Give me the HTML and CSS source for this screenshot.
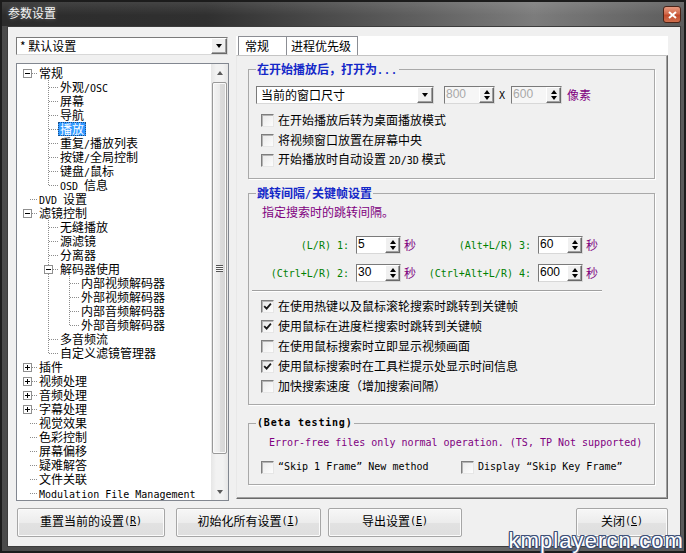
FILE: index.html
```html
<!DOCTYPE html>
<html lang="zh-CN">
<head>
<meta charset="utf-8">
<title>参数设置</title>
<link rel="stylesheet" href="styles.css">
</head>
<body>
<div class="window">
  <div class="titlebar">
    <span class="title">参数设置</span>
    <span class="close"><svg width="9" height="8" viewBox="0 0 9 8"><path d="M1 1 L8 7 M8 1 L1 7" stroke="#fff" stroke-width="2" fill="none"/></svg></span>
  </div>
  <div class="client">
    <div class="main">
      <div class="leftcol">
        <div class="combo preset">
          <span class="combo-text">* 默认设置</span>
          <span class="drop"><i class="tri-dn"></i></span>
        </div>
        <div class="tree">
          <div class="tree-list">
            <div class="row"><span class="c bx"><i class="box minus"></i></span><span class="lbl">常规</span></div>
            <div class="row"><span class="c"></span><span class="c t"></span><span class="lbl">外观<span class="en">/OSC</span></span></div>
            <div class="row"><span class="c"></span><span class="c t"></span><span class="lbl">屏幕</span></div>
            <div class="row"><span class="c"></span><span class="c t"></span><span class="lbl">导航</span></div>
            <div class="row"><span class="c"></span><span class="c t"></span><span class="lbl sel">播放</span></div>
            <div class="row"><span class="c"></span><span class="c t"></span><span class="lbl">重复<span class="en">/</span>播放列表</span></div>
            <div class="row"><span class="c"></span><span class="c t"></span><span class="lbl">按键<span class="en">/</span>全局控制</span></div>
            <div class="row"><span class="c"></span><span class="c t"></span><span class="lbl">键盘<span class="en">/</span>鼠标</span></div>
            <div class="row"><span class="c"></span><span class="c l"></span><span class="lbl"><span class="en">OSD </span>信息</span></div>
            <div class="row"><span class="c rl"></span><span class="lbl"><span class="en">DVD </span>设置</span></div>
            <div class="row"><span class="c bx"><i class="box minus"></i></span><span class="lbl">滤镜控制</span></div>
            <div class="row"><span class="c"></span><span class="c t"></span><span class="lbl">无缝播放</span></div>
            <div class="row"><span class="c"></span><span class="c t"></span><span class="lbl">源滤镜</span></div>
            <div class="row"><span class="c"></span><span class="c t"></span><span class="lbl">分离器</span></div>
            <div class="row"><span class="c"></span><span class="c t bx"><i class="box minus"></i></span><span class="lbl">解码器使用</span></div>
            <div class="row"><span class="c"></span><span class="c v"></span><span class="c t"></span><span class="lbl">内部视频解码器</span></div>
            <div class="row"><span class="c"></span><span class="c v"></span><span class="c t"></span><span class="lbl">外部视频解码器</span></div>
            <div class="row"><span class="c"></span><span class="c v"></span><span class="c t"></span><span class="lbl">内部音频解码器</span></div>
            <div class="row"><span class="c"></span><span class="c v"></span><span class="c l"></span><span class="lbl">外部音频解码器</span></div>
            <div class="row"><span class="c"></span><span class="c t"></span><span class="lbl">多音频流</span></div>
            <div class="row"><span class="c"></span><span class="c l"></span><span class="lbl">自定义滤镜管理器</span></div>
            <div class="row"><span class="c bx"><i class="box plus"></i></span><span class="lbl">插件</span></div>
            <div class="row"><span class="c bx"><i class="box plus"></i></span><span class="lbl">视频处理</span></div>
            <div class="row"><span class="c bx"><i class="box plus"></i></span><span class="lbl">音频处理</span></div>
            <div class="row"><span class="c bx"><i class="box plus"></i></span><span class="lbl">字幕处理</span></div>
            <div class="row"><span class="c rl"></span><span class="lbl">视觉效果</span></div>
            <div class="row"><span class="c rl"></span><span class="lbl">色彩控制</span></div>
            <div class="row"><span class="c rl"></span><span class="lbl">屏幕偏移</span></div>
            <div class="row"><span class="c rl"></span><span class="lbl">疑难解答</span></div>
            <div class="row"><span class="c rl"></span><span class="lbl">文件关联</span></div>
            <div class="row"><span class="c rl"></span><span class="lbl"><span class="en">Modulation File Management</span></span></div>
          </div>
          <div class="vscroll">
            <div class="sbtn"><i class="tri-up gray"></i></div>
            <div class="track"><div class="thumb"><i class="grip"></i></div></div>
            <div class="sbtn"><i class="tri-dn gray"></i></div>
          </div>
        </div>
      </div>
      <div class="rightcol">
        <div class="tabs">
          <div class="tab tab1 active">常规</div>
          <div class="tab tab2">进程优先级</div>
        </div>
        <div class="panel">
          <fieldset class="group g1">
            <legend class="blue">在开始播放后，打开为<span class="en">...</span></legend>
            <div class="sizerow">
              <div class="combo wincombo"><span class="combo-text">当前的窗口尺寸</span><span class="drop"><i class="tri-dn"></i></span></div>
              <div class="spin dis s51 sp1"><span class="val">800</span><span class="spinbtn"><i class="tri-up"></i><i class="tri-dn"></i></span></div>
              <span class="en xmark">X</span>
              <div class="spin dis s51 sp2"><span class="val">600</span><span class="spinbtn"><i class="tri-up"></i><i class="tri-dn"></i></span></div>
              <span class="purple px">像素</span>
            </div>
            <div class="checks first">
              <div class="chk"><span class="cb"></span><span>在开始播放后转为桌面播放模式</span></div>
              <div class="chk"><span class="cb"></span><span>将视频窗口放置在屏幕中央</span></div>
              <div class="chk"><span class="cb"></span><span>开始播放时自动设置 <span class="en">2D/3D</span> 模式</span></div>
            </div>
          </fieldset>

          <fieldset class="group g2">
            <legend class="blue">跳转间隔<span class="en">/</span>关键帧设置</legend>
            <div class="hint purple">指定搜索时的跳转间隔。</div>
            <div class="jumprow r1">
              <span class="en green lab1">(L/R) 1:</span>
              <div class="spin s45"><span class="val">5</span><span class="spinbtn"><i class="tri-up"></i><i class="tri-dn"></i></span></div>
              <span class="purple sec">秒</span>
              <span class="en green lab2">(Alt+L/R) 3:</span>
              <div class="spin s45"><span class="val">60</span><span class="spinbtn"><i class="tri-up"></i><i class="tri-dn"></i></span></div>
              <span class="purple sec">秒</span>
            </div>
            <div class="jumprow r2">
              <span class="en green lab1">(Ctrl+L/R) 2:</span>
              <div class="spin s45"><span class="val">30</span><span class="spinbtn"><i class="tri-up"></i><i class="tri-dn"></i></span></div>
              <span class="purple sec">秒</span>
              <span class="en green lab2">(Ctrl+Alt+L/R) 4:</span>
              <div class="spin s45"><span class="val">600</span><span class="spinbtn"><i class="tri-up"></i><i class="tri-dn"></i></span></div>
              <span class="purple sec">秒</span>
            </div>
            <div class="sep"></div>
            <div class="checks second">
              <div class="chk"><span class="cb on"><svg width="9" height="9" viewBox="0 0 9 9"><path d="M1.2 4.2 L3.6 6.6 L7.9 1.6" stroke="#1a1a1a" stroke-width="1.8" fill="none"/></svg></span><span>在使用热键以及鼠标滚轮搜索时跳转到关键帧</span></div>
              <div class="chk"><span class="cb on"><svg width="9" height="9" viewBox="0 0 9 9"><path d="M1.2 4.2 L3.6 6.6 L7.9 1.6" stroke="#1a1a1a" stroke-width="1.8" fill="none"/></svg></span><span>使用鼠标在进度栏搜索时跳转到关键帧</span></div>
              <div class="chk"><span class="cb"></span><span>在使用鼠标搜索时立即显示视频画面</span></div>
              <div class="chk"><span class="cb on"><svg width="9" height="9" viewBox="0 0 9 9"><path d="M1.2 4.2 L3.6 6.6 L7.9 1.6" stroke="#1a1a1a" stroke-width="1.8" fill="none"/></svg></span><span>使用鼠标搜索时在工具栏提示处显示时间信息</span></div>
              <div class="chk"><span class="cb"></span><span>加快搜索速度（增加搜索间隔）</span></div>
            </div>
          </fieldset>

          <fieldset class="group g3">
            <legend class="beta">(Beta testing)</legend>
            <div class="err en purple">Error-free files only normal operation. (TS, TP Not supported)</div>
            <div class="betachecks">
              <div class="chk b1"><span class="cb"></span><span class="en">“Skip 1 Frame” New method</span></div>
              <div class="chk"><span class="cb"></span><span class="en">Display “Skip Key Frame”</span></div>
            </div>
          </fieldset>
        </div>
      </div>
    </div>
    <div class="buttons">
      <div class="btn btn1">重置当前的设置<span class="en">(<u>R</u>)</span></div>
      <div class="btn btn2">初始化所有设置<span class="en">(<u>I</u>)</span></div>
      <div class="btn btn3">导出设置<span class="en">(<u>E</u>)</span></div>
      <div class="btn btn4">关闭<span class="en">(<u>C</u>)</span></div>
    </div>
  </div>
  <div class="watermark">kmplayercn.com</div>
</div>
</body>
</html>
```

FILE: styles.css
```css
* { box-sizing: border-box; }

html, body {
  margin: 0;
  padding: 0;
}

body {
  width: 686px;
  height: 553px;
  overflow: hidden;
  font-family: "Noto Sans CJK SC", "Liberation Sans", sans-serif;
  font-size: 12px;
  color: #000;
  background: #2a2a2a;
}

:root {
  --dv: repeating-linear-gradient(to bottom, #8c8c8c 0 1px, transparent 1px 2px);
  --dh: repeating-linear-gradient(to right, #8c8c8c 0 1px, transparent 1px 2px);
}

.en {
  font-family: "DejaVu Sans Mono", "Liberation Mono", monospace;
  font-size: 10px;
  letter-spacing: 0;
}

.blue { color: #1428c8; }
.purple { color: #800080; }
.green { color: #008000; }

/* window frame */
.window {
  position: relative;
  width: 686px;
  height: 553px;
  border: 2px solid #1c1c1c;
  background: linear-gradient(to right, #4a4a4a, #6e6e6e 60%, #5a5a5a);
  display: flex;
  flex-direction: column;
}

.titlebar {
  height: 24px;
  flex: none;
  display: flex;
  align-items: flex-start;
  background:
    linear-gradient(to bottom, rgba(255,255,255,0.10), rgba(255,255,255,0) 55%),
    linear-gradient(to right, #2c2c2c 0%, #303030 30%, #5e5e5e 60%, #7c7c7c 78%, #5c5c5c 100%);
}

.title {
  margin: 4px 0 0 6px;
  line-height: 14px;
  color: #f4f4f4;
  text-shadow: 0 0 4px rgba(255,255,255,0.35);
}

.close {
  margin: 4px 3px 0 auto;
  width: 18px;
  height: 17px;
  border: 1px solid #4a2418;
  border-radius: 3px;
  background: linear-gradient(to bottom, #e89a80 0%, #d26a4c 45%, #c24a2c 55%, #d0704e 100%);
  display: flex;
  align-items: center;
  justify-content: center;
}

.client {
  flex: 1;
  margin: 0 3px 4px 5px;
  border: 1px solid #3c3c3c;
  background: #f0f0f0;
  padding: 9px 12px 0 8px;
  display: flex;
  flex-direction: column;
}

.main {
  height: 465px;
  display: flex;
  gap: 7px;
}

/* left column */
.leftcol {
  width: 213px;
  flex: none;
  padding-top: 1px;
  display: flex;
  flex-direction: column;
  gap: 8px;
}

.combo {
  height: 18px;
  display: flex;
  align-items: stretch;
  background: #fff;
  border: 1px solid;
  border-color: #7a7a7a #d8d8d8 #d8d8d8 #7a7a7a;
}

.preset { width: 212px; }

.combo-text {
  flex: 1;
  padding-left: 3px;
  line-height: 16px;
  white-space: nowrap;
  overflow: hidden;
}

.drop {
  width: 16px;
  flex: none;
  background: #f0f0f0;
  border: 1px solid;
  border-color: #fff #696969 #696969 #fff;
  box-shadow: inset -1px -1px 0 #a0a0a0;
  display: flex;
  align-items: center;
  justify-content: center;
}

.tri-dn {
  display: block;
  width: 1px;
  height: 0;
  border-left: 3px solid transparent;
  border-right: 3px solid transparent;
  border-top: 4px solid #000;
}

.tri-up {
  display: block;
  width: 1px;
  height: 0;
  border-left: 3px solid transparent;
  border-right: 3px solid transparent;
  border-bottom: 4px solid #000;
}

.tri-up.gray { border-bottom-color: #5a5a5a; }
.tri-dn.gray { border-top-color: #5a5a5a; }

.tree {
  height: 438px;
  display: flex;
  background: #fff;
  border: 1px solid #828790;
}

.tree-list {
  flex: 1;
  padding-top: 2px;
  overflow: hidden;
}

.row {
  height: 14px;
  display: flex;
  align-items: center;
  white-space: nowrap;
}

.c {
  width: 21px;
  height: 14px;
  flex: none;
  display: flex;
  align-items: center;
  background-repeat: no-repeat;
}

.c.v {
  background-image: var(--dv);
  background-size: 1px 14px;
  background-position: 10px 0;
}

.c.t {
  background-image: var(--dv), var(--dh);
  background-size: 1px 14px, 10px 1px;
  background-position: 10px 0, 11px 7px;
}

.c.l {
  background-image: var(--dv), var(--dh);
  background-size: 1px 8px, 10px 1px;
  background-position: 10px 0, 11px 7px;
}

.c.rl {
  background-image: var(--dh);
  background-size: 8px 1px;
  background-position: 13px 7px;
}

.c.bx { padding-left: 6px; }

.c.bx:not(.t) {
  background-image: var(--dh);
  background-size: 6px 1px;
  background-position: 15px 7px;
}

.box {
  display: block;
  width: 9px;
  height: 9px;
  border: 1px solid #8f8f8f;
  background-color: #fff;
  background-repeat: no-repeat;
}

.box.minus {
  background-image: linear-gradient(#000, #000);
  background-size: 5px 1px;
  background-position: 1px 3px;
}

.box.plus {
  background-image: linear-gradient(#000, #000), linear-gradient(#000, #000);
  background-size: 5px 1px, 1px 5px;
  background-position: 1px 3px, 3px 1px;
}

.lbl {
  height: 14px;
  line-height: 14px;
  padding: 0 1px;
}

.lbl.sel {
  background: #3399ff;
  color: #fff;
  outline: 1px dotted #1a4f8a;
  outline-offset: -1px;
  padding: 0 2px;
  margin-left: -1px;
}

.vscroll {
  width: 17px;
  flex: none;
  display: flex;
  flex-direction: column;
  background: linear-gradient(to right, #e6e6e6, #f2f2f2 30%, #f2f2f2 70%, #e6e6e6);
}

.sbtn {
  height: 17px;
  flex: none;
  display: flex;
  align-items: center;
  justify-content: center;
}

.track {
  flex: 1;
  padding: 1px 1px 0 1px;
}

.thumb {
  height: 372px;
  border: 1px solid #999;
  border-radius: 2px;
  background: linear-gradient(to right, #f4f4f4, #ebebeb 50%, #dcdcdc 51%, #d6d6d6);
  box-shadow: inset 0 0 0 1px #fafafa;
  display: flex;
  align-items: center;
  justify-content: center;
}

.grip {
  display: block;
  width: 7px;
  height: 7px;
  background: repeating-linear-gradient(to bottom, #555 0 1px, #f8f8f8 1px 2px);
}

/* right column */
.rightcol {
  flex: 1;
  display: flex;
  flex-direction: column;
}

.tabs {
  height: 19px;
  flex: none;
  display: flex;
  padding-left: 2px;
  background: #fff;
}

.tab {
  height: 19px;
  border: 1px solid #8c8e94;
  border-bottom: none;
  line-height: 17px;
  background: #fff;
  white-space: nowrap;
}

.tab1 { width: 49px; padding-left: 6px; }
.tab2 { width: 71px; padding-left: 4px; border-left: none; }

.panel {
  height: 444px;
  border: 1px solid;
  border-color: #c4c4c4 #696969 #696969 #e8e8e8;
  box-shadow: inset -1px -1px 0 #a0a0a0;
  background: #f0f0f0;
  padding: 6px 0 0 11px;
}

.group {
  width: 407px;
  margin: 0;
  padding: 0 7px 8px;
  border: 1px solid #a9a9a9;
  box-shadow: 1px 1px 0 #fff;
  min-inline-size: 0;
}

.group legend {
  padding: 0 1px;
  line-height: 14px;
  height: 14px;
  font-weight: bold;
  white-space: nowrap;
}

.group legend .en { letter-spacing: 1px; }

.group legend.beta {
  font-family: "DejaVu Sans Mono", "Liberation Mono", monospace;
  font-size: 10px;
  letter-spacing: 0.8px;
  color: #000;
}

.g2 { margin-top: 7px; }
.g3 { margin-top: 11px; padding-bottom: 7px; }

/* group 1 */
.sizerow {
  margin-top: 10px;
  height: 18px;
  display: flex;
  align-items: center;
}

.wincombo { width: 178px; height: 18px; }
.wincombo .combo-text { padding-left: 4px; }

.spin {
  height: 18px;
  display: flex;
  background: #fff;
  border: 1px solid;
  border-color: #7a7a7a #d8d8d8 #d8d8d8 #7a7a7a;
}

.spin.dis { background: #f6f6f6; }
.spin.dis .val { color: #a8a8a8; }

.s51 { width: 51px; }
.s45 { width: 45px; }
.sp1 { margin-left: 10px; }
.sp2 { margin-left: 6px; }

.val {
  flex: 1;
  font-family: "Liberation Sans", sans-serif;
  font-size: 12px;
  line-height: 15px;
  padding-left: 1px;
}

.spinbtn {
  width: 15px;
  flex: none;
  display: flex;
  flex-direction: column;
  align-items: center;
  justify-content: center;
  gap: 2px;
  background: #f0f0f0;
  border: 1px solid;
  border-color: #fff #696969 #696969 #fff;
  box-shadow: inset -1px -1px 0 #a0a0a0;
}

.xmark { margin-left: 4px; }
.px { margin-left: 5px; line-height: 14px; }

.checks.first { margin-top: 6px; }
.checks.second { margin-top: 4px; }

.chk {
  height: 20px;
  display: flex;
  align-items: center;
  white-space: nowrap;
  line-height: 14px;
}

.cb {
  width: 13px;
  height: 13px;
  flex: none;
  margin: 0 4px 0 5px;
  border: 1px solid;
  border-color: #7d7d7d #e6e6e6 #e6e6e6 #7d7d7d;
  box-shadow: inset 1px 1px 0 #b4b4b4;
  background: linear-gradient(135deg, #e8e8e8, #fdfdfd);
  display: flex;
  align-items: center;
  justify-content: center;
}

/* group 2 */
.hint {
  margin-top: 4px;
  height: 16px;
  line-height: 16px;
  padding-left: 6px;
}

.jumprow {
  height: 18px;
  display: flex;
  align-items: center;
  white-space: nowrap;
}

.jumprow.r1 { margin-top: 16px; }
.jumprow.r2 { margin-top: 10px; }

.lab1 { width: 96px; text-align: right; padding-right: 3px; }
.lab2 { width: 117px; text-align: right; padding-right: 3px; }
.jumprow .spin { margin-left: 4px; }
.sec { margin-left: 3px; width: 13px; line-height: 14px; }

.sep {
  margin: 8px 0 0 -4px;
  width: 350px;
  height: 2px;
  border-top: 1px solid #a0a0a0;
  border-bottom: 1px solid #fff;
}

/* group 3 */
.err {
  margin-top: 5px;
  height: 16px;
  line-height: 16px;
  padding-left: 13px;
  white-space: nowrap;
}

.betachecks {
  margin-top: 6px;
  display: flex;
}

.chk.b1 { width: 200px; }

/* buttons */
.buttons {
  margin-top: 7px;
  height: 29px;
  display: flex;
}

.btn {
  height: 29px;
  border: 1px solid #a6a6a6;
  border-radius: 2px;
  background: linear-gradient(to bottom, #f7f7f7, #ececec 50%, #e2e2e2 51%, #dedede);
  box-shadow: inset 0 0 0 1px #fbfbfb;
  display: flex;
  align-items: center;
  justify-content: center;
  padding-bottom: 3px;
  line-height: 14px;
  white-space: nowrap;
}

.btn1 { width: 148px; margin-left: 1px; }
.btn2 { width: 145px; margin-left: 11px; }
.btn3 { width: 134px; margin-left: 7px; }
.btn4 { width: 92px; margin-left: auto; }

/* watermark overlay */
.watermark {
  position: absolute;
  right: 0;
  bottom: 2px;
  height: 16px;
  font-family: "Liberation Sans", sans-serif;
  font-size: 22px;
  line-height: 16px;
  letter-spacing: 1.1px;
  color: #fff;
  text-shadow:
    1px 0 0 #3e5078, -1px 0 0 #3e5078, 0 1px 0 #3e5078, 0 -1px 0 #3e5078,
    1px 1px 0 #3e5078, -1px -1px 0 #3e5078, 1px -1px 0 #3e5078, -1px 1px 0 #3e5078;
}
```
